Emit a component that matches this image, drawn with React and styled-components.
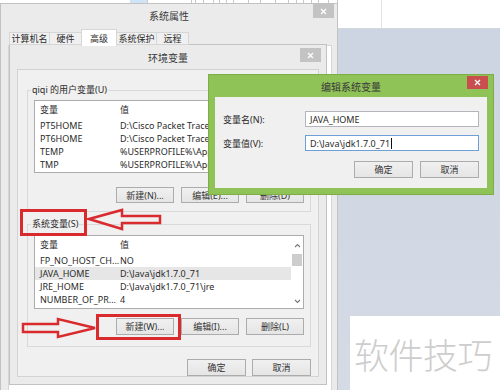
import styled, { createGlobalStyle } from 'styled-components'

const Global = createGlobalStyle`
  html, body { margin: 0; padding: 0; }
  body { font-family: "Noto Sans", "Noto Sans CJK SC", sans-serif; }
`

const Desktop = styled.div`
  position: relative;
  width: 500px;
  height: 390px;
  overflow: hidden;
  background: linear-gradient(#cbd4e1, #d5dbe5);
  font-family: "Noto Sans", "Noto Sans CJK SC", sans-serif;
  font-size: 9px;
  color: #2a2a2a;
`

// explorer window peeking out behind the dialogs
const BackWindow = styled.div`
  position: absolute;
  left: 0;
  top: 0;
  width: 500px;
  height: 28px;
  background: #fff;
  border-bottom: 1px solid #d3d8df;
  display: flex;
`
const BackLeft = styled.div`
  width: 338px;
  display: flex;
  align-items: flex-start;
`
const NavArrows = styled.div`
  width: 130px;
  height: 4px;
  border-bottom: 1px solid #d0d0d0;
  box-sizing: border-box;
`
const RibbonCell = styled.div`
  width: ${p => p.$w}px;
  height: 4px;
  border-right: 1px solid #c9c9c9;
  box-sizing: border-box;
  background: ${p => (p.$hot ? '#cfe4f7' : '#fff')};
`
const BackPane = styled.div`
  width: 43px;
  border-right: 1px solid #e3e3e3;
`

const Win = styled.div`
  position: absolute;
  left: ${p => p.$x}px;
  top: ${p => p.$y}px;
  width: ${p => p.$w}px;
  height: ${p => p.$h}px;
  box-sizing: border-box;
  background: ${p => (p.$active ? '#8fc257' : '#ebebeb')};
  border: 1px solid ${p => (p.$active ? '#7cae45' : '#c2c2c2')};
  display: flex;
  flex-direction: column;
  padding: 0 ${p => p.$pr}px ${p => p.$pb}px ${p => p.$pl}px;
`
const TitleBar = styled.div`
  flex: none;
  height: ${p => p.$h}px;
  margin: 0 -${p => p.$pr}px 0 -${p => p.$pl}px;
  display: flex;
  align-items: center;
  justify-content: center;
  font-size: 10px;
  color: #3a3a3a;
`
const CloseBtn = styled.div`
  position: absolute;
  right: ${p => p.$r}px;
  top: ${p => p.$t}px;
  width: 21px;
  height: ${p => p.$h}px;
  background: ${p => (p.$red ? '#c94f4f' : '#c3c3c3')};
  display: flex;
  align-items: center;
  justify-content: center;
`

const TabRow = styled.div`
  display: flex;
  align-items: flex-end;
  height: 16px;
  margin-top: 2px;
  padding-left: 2px;
  position: relative;
  z-index: 1;
`
const Tab = styled.div`
  width: ${p => p.$w}px;
  height: ${p => (p.$sel ? 17 : 13)}px;
  box-sizing: border-box;
  border: 1px solid #d6d6d6;
  border-bottom: ${p => (p.$sel ? 'none' : '1px solid #d6d6d6')};
  margin-left: -1px;
  background: ${p => (p.$sel ? '#fff' : '#f0f0f0')};
  display: flex;
  align-items: center;
  justify-content: center;
  font-size: 9px;
  margin-bottom: ${p => (p.$sel ? -1 : 0)}px;
`
const TabPanel = styled.div`
  flex: 1;
  background: #fff;
  border: 1px solid #d6d6d6;
`

const Client = styled.div`
  flex: 1;
  background: #f0f0f0;
  border: 1px solid #d3d3d3;
  padding: 14px 7px 0 9px;
  display: flex;
  flex-direction: column;
`
const Group = styled.fieldset`
  margin: ${p => p.$mt}px 0 0;
  padding: 0 6px ${p => p.$pb}px 6px;
  border: 1px solid #d9d9d9;
  min-width: 0;
`
const Legend = styled.legend`
  margin-left: -3px;
  padding: 0 1px;
  font-size: 9px;
  line-height: 12px;
`
const List = styled.div`
  margin-top: ${p => p.$mt}px;
  height: ${p => p.$h}px;
  box-sizing: border-box;
  background: #fff;
  border: 1px solid #acacac;
  display: flex;
  overflow: hidden;
`
const ListBody = styled.div`
  flex: 1;
  min-width: 0;
`
const Row = styled.div`
  display: grid;
  grid-template-columns: 85px 1fr;
  height: 13px;
  line-height: 13px;
  background: ${p => (p.$sel ? '#e6e6e6' : 'transparent')};
  white-space: nowrap;
`
const HeadRow = styled(Row)`
  height: 18px;
  line-height: 18px;
`
const Cell = styled.div`
  padding-left: ${p => (p.$first ? 5 : 0)}px;
  overflow: hidden;
`
const Scrollbar = styled.div`
  width: 12px;
  display: flex;
  flex-direction: column;
  align-items: center;
  background: #fff;
`
const ScrollArrow = styled.div`
  height: ${p => p.$h}px;
  display: flex;
  align-items: center;
  justify-content: center;
`
const Thumb = styled.div`
  width: 10px;
  height: 12px;
  background: #cdcdcd;
`
const Spacer = styled.div`
  flex: 1;
`
const ButtonRow = styled.div`
  display: flex;
  justify-content: flex-end;
  gap: ${p => p.$gap}px;
  margin-top: ${p => p.$mt}px;
`
const Button = styled.div`
  width: ${p => p.$w}px;
  height: ${p => p.$h}px;
  box-sizing: border-box;
  border: 1px solid #acacac;
  background: linear-gradient(#f0f0f0, #e5e5e5);
  display: flex;
  align-items: center;
  justify-content: center;
  font-size: 9px;
  color: #333;
`

const EditClient = styled.div`
  flex: 1;
  background: #f0f0f0;
  padding: 14px 8px 0 8px;
  display: flex;
  flex-direction: column;
`
const FormGrid = styled.div`
  display: grid;
  grid-template-columns: 82px 1fr;
  row-gap: 8px;
  align-items: center;
`
const Label = styled.div`
  font-size: 9px;
`
const Input = styled.div`
  height: 16px;
  box-sizing: border-box;
  background: #fff;
  border: 1px solid ${p => (p.$focus ? '#6f9fd8' : '#b3b5ba')};
  padding: 0 4px;
  display: flex;
  align-items: center;
  font-size: 9px;
  white-space: nowrap;
`
const Caret = styled.span`
  display: inline-block;
  width: 1px;
  height: 11px;
  background: #111;
  margin-left: 1px;
`

const Watermark = styled.div`
  position: absolute;
  right: 0;
  bottom: 0;
  width: 150px;
  height: 74px;
  background: #fff;
  display: flex;
  align-items: center;
  padding-left: 4px;
  box-sizing: border-box;
  font-family: "Noto Sans CJK SC", sans-serif;
  font-size: 35px;
  font-weight: 300;
  color: #cdcdcd;
  letter-spacing: -0.5px;
`
const Marks = styled.svg`
  position: absolute;
  left: 0;
  top: 0;
  pointer-events: none;
`

const X = () => (
  <svg width="7" height="7" viewBox="0 0 7 7">
    <path d="M1 1 L6 6 M6 1 L1 6" stroke="#fff" strokeWidth="1.3" />
  </svg>
)

const Chevron = ({ down }) => (
  <svg width="7" height="5" viewBox="0 0 7 5">
    <path d={down ? 'M1 1 L3.5 3.5 L6 1' : 'M1 4 L3.5 1.5 L6 4'} stroke="#777" strokeWidth="1.1" fill="none" />
  </svg>
)

// the edit dialog covers the rest of these values
const userVars = [
  ['PT5HOME', 'D:\\Cisco Packet Trace'],
  ['PT6HOME', 'D:\\Cisco Packet Trace'],
  ['TEMP', '%USERPROFILE%\\App'],
  ['TMP', '%USERPROFILE%\\App'],
]
const sysVars = [
  ['FP_NO_HOST_CH...', 'NO'],
  ['JAVA_HOME', 'D:\\Java\\jdk1.7.0_71', true],
  ['JRE_HOME', 'D:\\Java\\jdk1.7.0_71\\jre'],
  ['NUMBER_OF_PR...', '4'],
]

const ribbon = [18, 45, 4, 8, 10, 6, 7, 7, 15, 12, 15, 13, 8, 7, 8, 7, 10, 9]

export default function App() {
  return (
    <>
      <Global />
      <Desktop>
        <BackWindow>
          <BackLeft>
            <NavArrows />
            {ribbon.map((w, i) => (
              <RibbonCell key={i} $w={w} $hot={i === 0} />
            ))}
          </BackLeft>
          <BackPane />
        </BackWindow>

        <Win $x={0} $y={3} $w={338} $h={400} $pl={7} $pr={5} $pb={0}>
          <TitleBar $h={23} $pl={7} $pr={5}>系统属性</TitleBar>
          <CloseBtn $r={3} $t={0} $h={14}><X /></CloseBtn>
          <TabRow>
            <Tab $w={41}>计算机名</Tab>
            <Tab $w={33}>硬件</Tab>
            <Tab $w={36} $sel>高级</Tab>
            <Tab $w={41}>系统保护</Tab>
            <Tab $w={33}>远程</Tab>
          </TabRow>
          <TabPanel />
        </Win>

        <Win $x={9} $y={44} $w={318} $h={341} $pl={7} $pr={7} $pb={7}>
          <TitleBar $h={24} $pl={7} $pr={7}>环境变量</TitleBar>
          <CloseBtn $r={5} $t={3} $h={14}><X /></CloseBtn>
          <Client>
            <Group $mt={0} $pb={8}>
              <Legend>qiqi 的用户变量(U)</Legend>
              <List $mt={4} $h={73}>
                <ListBody>
                  <HeadRow><Cell $first>变量</Cell><Cell>值</Cell></HeadRow>
                  {userVars.map(([k, v]) => (
                    <Row key={k}><Cell $first>{k}</Cell><Cell>{v}</Cell></Row>
                  ))}
                </ListBody>
              </List>
              <ButtonRow $gap={7} $mt={14}>
                <Button $w={58} $h={16}>新建(N)...</Button>
                <Button $w={58} $h={16}>编辑(E)...</Button>
                <Button $w={58} $h={16}>删除(D)</Button>
              </ButtonRow>
            </Group>

            <Group $mt={6} $pb={11}>
              <Legend>系统变量(S)</Legend>
              <List $mt={5} $h={74}>
                <ListBody>
                  <HeadRow><Cell $first>变量</Cell><Cell>值</Cell></HeadRow>
                  {sysVars.map(([k, v, sel]) => (
                    <Row key={k} $sel={sel}><Cell $first>{k}</Cell><Cell>{v}</Cell></Row>
                  ))}
                </ListBody>
                <Scrollbar>
                  <ScrollArrow $h={18}><Chevron /></ScrollArrow>
                  <Thumb />
                  <Spacer />
                  <ScrollArrow $h={14}><Chevron down /></ScrollArrow>
                </Scrollbar>
              </List>
              <ButtonRow $gap={7} $mt={9}>
                <Button $w={58} $h={17}>新建(W)...</Button>
                <Button $w={58} $h={17}>编辑(I)...</Button>
                <Button $w={58} $h={17}>删除(L)</Button>
              </ButtonRow>
            </Group>

            <ButtonRow $gap={6} $mt={12}>
              <Button $w={59} $h={17}>确定</Button>
              <Button $w={59} $h={17}>取消</Button>
            </ButtonRow>
          </Client>
        </Win>

        <Win $x={208} $y={74} $w={286} $h={121} $pl={6} $pr={6} $pb={6} $active>
          <TitleBar $h={22} $pl={6} $pr={6}>编辑系统变量</TitleBar>
          <CloseBtn $r={5} $t={1} $h={13} $red><X /></CloseBtn>
          <EditClient>
            <FormGrid>
              <Label>变量名(N):</Label>
              <Input>JAVA_HOME</Input>
              <Label>变量值(V):</Label>
              <Input $focus>{'D:\\Java\\jdk1.7.0_71'}<Caret /></Input>
            </FormGrid>
            <ButtonRow $gap={7} $mt={10}>
              <Button $w={59} $h={17}>确定</Button>
              <Button $w={59} $h={17}>取消</Button>
            </ButtonRow>
          </EditClient>
        </Win>

        <Watermark>软件技巧</Watermark>

        <Marks width="500" height="390" viewBox="0 0 500 390">
          <g stroke="#d92a2e" fill="none" strokeWidth="3">
            <rect x="21.5" y="210.5" width="64" height="24" />
            <rect x="97.5" y="315.5" width="82" height="23" />
          </g>
          <g stroke="#d92a2e" fill="none" strokeWidth="2.5" strokeLinejoin="miter">
            <polygon points="89,219 122,210 122,216 160,216 160,223 122,223 122,229" />
            <polygon points="23,324 58,324 58,319 95,328 58,337 58,332 23,332" />
          </g>
        </Marks>
      </Desktop>
    </>
  )
}
